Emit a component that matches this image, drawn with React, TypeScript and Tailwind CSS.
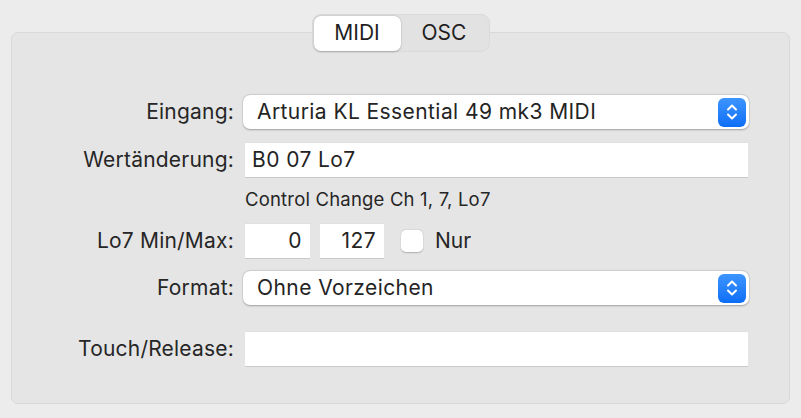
import React from 'react';

const font = { fontFamily: 'Inter, "Liberation Sans", sans-serif' };

const Stepper: React.FC = () => (
  <div className="flex h-[29px] w-[28px] items-center justify-center rounded-[6px] bg-gradient-to-b from-[#3d95ff] to-[#0b6ef6]">
    <svg width="14" height="20" viewBox="0 0 14 20" fill="none">
      <path d="M3 7.5 L7 3.5 L11 7.5" stroke="white" strokeWidth="2" strokeLinecap="round" strokeLinejoin="round" />
      <path d="M3 12.5 L7 16.5 L11 12.5" stroke="white" strokeWidth="2" strokeLinecap="round" strokeLinejoin="round" />
    </svg>
  </div>
);

const Popup: React.FC<{ value: string }> = ({ value }) => (
  <div className="flex h-[34px] w-[506px] items-center justify-between rounded-[7px] bg-white pl-[14px] pr-[3px] shadow-[0_0.5px_2px_rgba(0,0,0,0.28),0_0_0_0.5px_rgba(0,0,0,0.06)]">
    <span className="text-[21px] tracking-[0.02em] text-[#242424]">{value}</span>
    <Stepper />
  </div>
);

const Field: React.FC<{ value?: string; className?: string; right?: boolean }> = ({ value, className, right }) => (
  <div
    className={
      'flex h-[34px] items-center bg-white shadow-[0_1px_0_#c9c9c9,0_-0.5px_0_#dcdcdc] text-[21px] tracking-[0.02em] text-[#242424] ' +
      (right ? 'justify-end pr-[8px] ' : 'pl-[7px] ') +
      (className ?? '')
    }
  >
    {value}
  </div>
);

const Label: React.FC<{ children: React.ReactNode }> = ({ children }) => (
  <div className="w-[222px] shrink-0 text-right text-[21px] tracking-[0.01em] text-[#262626]">{children}</div>
);

export default function App() {
  return (
    <div className="h-[418px] w-[801px] bg-[#ececec] pt-[14px]" style={font}>
      <div className="relative z-10 mx-auto flex h-[38px] w-[178px] items-center rounded-[9px] border border-[#dadada] bg-[#e2e2e2] p-[1px]">
        <div className="flex h-[35px] w-[87px] items-center justify-center rounded-[7px] bg-white text-[21px] text-[#1f1f1f] shadow-[0_0.5px_2px_rgba(0,0,0,0.25)]">
          MIDI
        </div>
        <div className="flex flex-1 items-center justify-center text-[21px] text-[#1f1f1f]">OSC</div>
      </div>

      <div className="mx-[11px] -mt-[20px] h-[372px] rounded-[7px] border border-[#d9d9d9] bg-[#e5e5e5] pt-[62px]">
        <div className="flex items-center">
          <Label>Eingang:</Label>
          <div className="ml-[9px]">
            <Popup value="Arturia KL Essential 49 mk3 MIDI" />
          </div>
        </div>

        <div className="mt-[14px] flex items-center">
          <Label>Wertänderung:</Label>
          <Field value="B0 07 Lo7" className="ml-[11px] w-[503px]" />
        </div>

        <div className="ml-[233px] mt-[12px] text-[18.5px] leading-[20px] tracking-[0.01em] text-[#262626]">
          Control Change Ch 1, 7, Lo7
        </div>

        <div className="mt-[15px] flex items-center">
          <Label>Lo7 Min/Max:</Label>
          <Field value="0" right className="ml-[11px] w-[65px]" />
          <Field value="127" right className="ml-[10px] w-[64px]" />
          <div className="ml-[17px] h-[22px] w-[22px] rounded-[5px] bg-white shadow-[0_0.5px_1.5px_rgba(0,0,0,0.25)]" />
          <span className="ml-[12px] text-[21px] text-[#262626]">Nur</span>
        </div>

        <div className="mt-[13px] flex items-center">
          <Label>Format:</Label>
          <div className="ml-[9px]">
            <Popup value="Ohne Vorzeichen" />
          </div>
        </div>

        <div className="mt-[27px] flex items-center">
          <Label>Touch/Release:</Label>
          <Field className="ml-[11px] w-[503px]" />
        </div>
      </div>
    </div>
  );
}
